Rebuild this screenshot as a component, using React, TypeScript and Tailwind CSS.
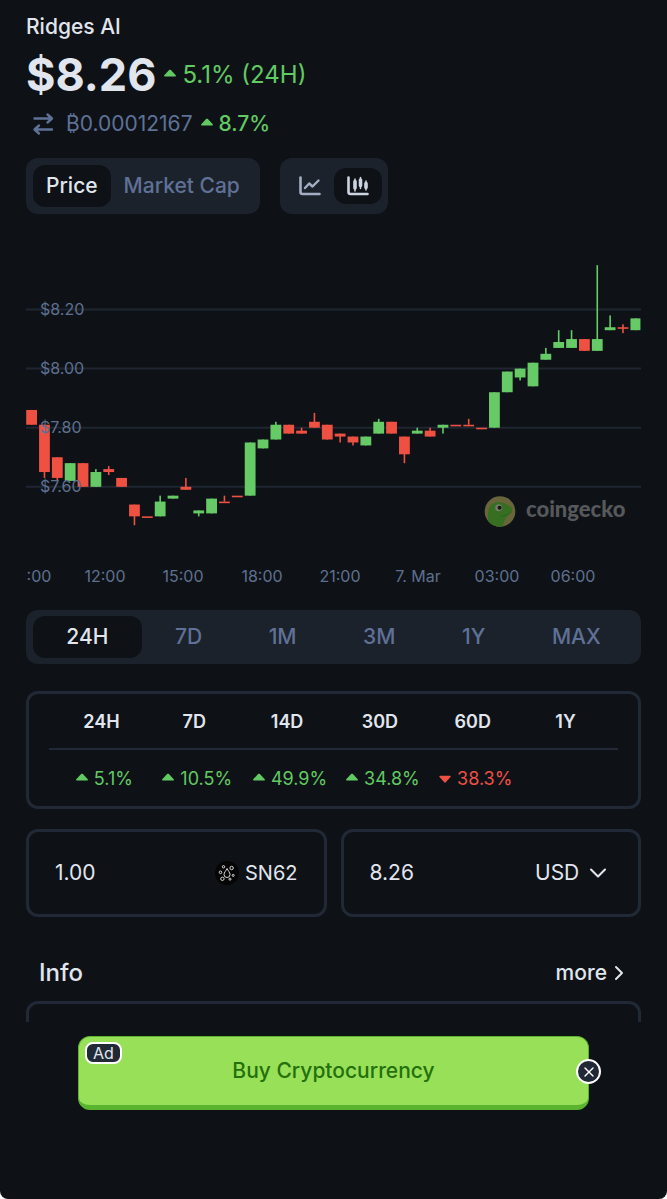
import { useState } from "react";
import { ChevronDown, ChevronRight, X } from "lucide-react";
import clsx from "clsx";

// open, close, high, low in cents
type Candle = [number, number, number, number];

const CANDLES: Candle[] = [
  [786, 781, 786, 781],
  [781, 765, 781, 763],
  [770, 763, 770, 762],
  [762, 768, 768, 762],
  [768, 760, 768, 760],
  [760, 765, 766, 760],
  [766, 765, 767, 764],
  [763, 760, 763, 760],
  [754, 750, 754, 747],
  [750, 750, 750, 750],
  [750, 755, 757, 750],
  [756, 757, 757, 756],
  [760, 759, 763, 759],
  [751, 752, 752, 750],
  [751, 756, 756, 751],
  [755, 755, 757, 755],
  [757, 757, 757, 757],
  [757, 775, 775, 757],
  [773, 776, 776, 773],
  [776, 781, 782, 776],
  [781, 778, 781, 778],
  [779, 778, 780, 778],
  [782, 780, 785, 780],
  [781, 776, 781, 776],
  [778, 777, 778, 775],
  [777, 775, 777, 774],
  [774, 777, 777, 774],
  [778, 782, 783, 778],
  [782, 778, 782, 778],
  [777, 771, 777, 768],
  [778, 779, 780, 778],
  [779, 777, 780, 777],
  [780, 781, 781, 778],
  [781, 781, 781, 781],
  [781, 781, 783, 781],
  [780, 780, 780, 780],
  [780, 792, 792, 780],
  [792, 799, 799, 792],
  [797, 800, 800, 796],
  [794, 802, 802, 794],
  [803, 805, 807, 803],
  [807, 809, 813, 807],
  [807, 810, 813, 807],
  [810, 806, 810, 806],
  [806, 810, 835, 806],
  [813, 814, 818, 813],
  [814, 814, 815, 812],
  [813, 817, 817, 813],
];

const PRICE_TICKS = [820, 800, 780, 760];

const TIME_TICKS = [
  { label: ":00", x: 13 },
  { label: "12:00", x: 79 },
  { label: "15:00", x: 157 },
  { label: "18:00", x: 236 },
  { label: "21:00", x: 314 },
  { label: "7. Mar", x: 392 },
  { label: "03:00", x: 471 },
  { label: "06:00", x: 547 },
];

const RANGES = ["24H", "7D", "1M", "3M", "1Y", "MAX"];

const CHANGES: { period: string; value: number | null }[] = [
  { period: "24H", value: 5.1 },
  { period: "7D", value: 10.5 },
  { period: "14D", value: 49.9 },
  { period: "30D", value: 34.8 },
  { period: "60D", value: -38.3 },
  { period: "1Y", value: null },
];

function priceY(cents: number) {
  return 59.5 + (820 - cents) * 2.955;
}

function Caret({ down = false }: { down?: boolean }) {
  return (
    <svg viewBox="0 0 12 12" className="size-3 shrink-0" aria-hidden="true">
      <path
        d={down ? "M1 3.5h10L6 9z" : "M5.6 1.4h.8L11.200 6.800H.8z"}
        fill="currentColor"
        stroke="currentColor"
        strokeWidth="1.4"
        strokeLinejoin="round"
      />
    </svg>
  );
}

function Change({ value, suffix = "" }: { value: number; suffix?: string }) {
  return (
    <span className={clsx("flex items-center gap-1.5", value < 0 ? "text-[#ee5044]" : "text-[#62ca62]")}>
      <Caret down={value < 0} />
      <span>
        {Math.abs(value).toFixed(1)}%{suffix}
      </span>
    </span>
  );
}

function SwapIcon() {
  return (
    <svg
      viewBox="0 0 22 24"
      className="h-6 w-[22px]"
      fill="none"
      stroke="currentColor"
      strokeWidth="2.4"
      strokeLinecap="round"
      strokeLinejoin="round"
      aria-hidden="true"
    >
      <path d="M2.500 6.500h17M15.500 2.500l4.500 4-4.500 4M20 17.500H3M7 13.500l-4.500 4 4.500 4" />
    </svg>
  );
}

function LineChartIcon() {
  return (
    <svg
      viewBox="0 0 22 20"
      className="h-5 w-[22px]"
      fill="none"
      stroke="currentColor"
      strokeLinecap="round"
      strokeLinejoin="round"
      aria-hidden="true"
    >
      <path d="M1.500 1.500V16q0 2 2 2H20.500" strokeWidth="2.600" />
      <path d="M6 12 10.200 7.500 13.500 10.500 19.500 4.500" strokeWidth="2.400" />
    </svg>
  );
}

function CandleChartIcon() {
  return (
    <svg viewBox="0 0 22 20" className="h-5 w-[22px]" fill="none" stroke="currentColor" strokeLinecap="round" aria-hidden="true">
      <path d="M1.500 1.500V16q0 2 2 2H20.500" strokeWidth="2.600" strokeLinejoin="round" />
      <path d="M8 3v12M13.500 1.500v11M19 5v9" strokeWidth="1.500" />
      <path d="M8 5.500v6.500M13.500 4v5.500M19 7.500v4" strokeWidth="3.600" />
    </svg>
  );
}

function SubnetIcon() {
  return (
    <svg viewBox="0 0 24 24" className="size-6" fill="none" stroke="#d8d8d8" aria-hidden="true">
      <circle cx="12" cy="12" r="12" fill="#050505" stroke="none" />
      <path d="M12 7.500c1 2.200 3 4 3 6a3 3 0 0 1-6 0c0-2 2-3.800 3-6z" strokeWidth="1" />
      <circle cx="8.500" cy="5.800" r="1.200" />
      <circle cx="16.600" cy="7" r="1.700" />
      <circle cx="5.500" cy="11.300" r="1.300" />
      <circle cx="18.200" cy="14.400" r="1" />
      <circle cx="7.400" cy="17.800" r="1.700" />
      <circle cx="15" cy="18.200" r="1" />
    </svg>
  );
}

function Watermark() {
  return (
    <g>
      <clipPath id="coin">
        <circle cx="474" cy="261.500" r="15.300" />
      </clipPath>
      <g clipPath="url(#coin)">
        <rect x="458" y="246" width="32" height="32" fill="#68653a" />
        <path
          d="M462 280C463 272 461 263 463 258.500c1-3 2.500-4.500 5-5.200 3-1.500 6-1.500 9-.6 3 1.200 5.500 2.300 8 4.300 1.500 1.500 1.500 3 .8 4.200-1 2-2.500 3.200-4 4.800-3 3-4.500 7-5.800 14z"
          fill="#366f22"
        />
        <path d="M474 266c5 0 8-1.500 11.500-4" stroke="#2e621e" fill="none" />
      </g>
      <circle cx="472.700" cy="257.700" r="3.500" fill="#75796e" />
      <circle cx="473.600" cy="257.700" r="2" fill="#14180f" />
      <text x="500" y="267" fill="#56585b" className="font-['Lato',sans-serif] text-[22px] font-black">
        coingecko
      </text>
    </g>
  );
}

function PriceChart() {
  return (
    <svg viewBox="0 0 615 350" className="block w-full" role="img" aria-label="Ridges AI price">
      {PRICE_TICKS.map((p) => (
        <path key={p} d={`M0 ${priceY(p)}H615`} stroke="#1f2631" strokeWidth="2" />
      ))}
      <Watermark />
      {CANDLES.map(([open, close, high, low], i) => {
        const x = 5.6 + i * 12.856;
        const top = priceY(Math.max(open, close));
        const height = Math.max(Math.abs(open - close) * 2.955, 1.6);
        return (
          <g key={i} fill={close > open ? "#66cb66" : "#ee5042"}>
            {high !== low && (
              <rect x={x - 0.8} y={priceY(high)} width="1.6" height={priceY(low) - priceY(high)} />
            )}
            <rect x={x - 5.4} y={top} width={i === CANDLES.length - 1 ? 10 : 10.8} height={height} />
          </g>
        );
      })}
      {PRICE_TICKS.map((p) => (
        <text key={p} x="14" y={priceY(p) + 5} fill="#5f708f" className="text-base">
          ${(p / 100).toFixed(2)}
        </text>
      ))}
      {TIME_TICKS.map((t) => (
        <text key={t.label} x={t.x} y="332" textAnchor="middle" fill="#5f708f" className="text-base">
          {t.label}
        </text>
      ))}
    </svg>
  );
}

export default function App() {
  const [metric, setMetric] = useState("Price");
  const [chartType, setChartType] = useState("candle");
  const [range, setRange] = useState("24H");

  return (
    <div className="bg-white">
      <div className="min-h-screen rounded-b-lg bg-[#0e1217] font-['Inter',sans-serif] text-[#e1e6ee]">
        <main className="px-[26px] pt-[13px]">
          <h1 className="text-[21px] leading-7 font-medium">Ridges AI</h1>
          <div className="mt-1.5 flex items-center gap-2">
            <span className="text-[45px] leading-14 font-bold">$8.26</span>
            <span className="text-2xl">
              <Change value={5.1} suffix=" (24H)" />
            </span>
          </div>
          <div className="mt-[5px] flex items-center gap-2 pl-1.5 text-[21px] leading-8 text-[#5f7196]">
            <button type="button" aria-label="Swap currency" className="mr-1">
              <SwapIcon />
            </button>
            <span>₿0.00012167</span>
            <span className="font-medium">
              <Change value={8.7} />
            </span>
          </div>

          <div className="mt-[18px] flex gap-5">
            <div className="flex rounded-xl bg-[#1c222c] p-[7px]">
              {["Price", "Market Cap"].map((m) => (
                <button
                  key={m}
                  type="button"
                  onClick={() => setMetric(m)}
                  className={clsx(
                    "h-[42px] rounded-xl px-[13px] text-[21px] font-medium",
                    metric === m ? "bg-[#0e1217]" : "text-[#5f7196]",
                  )}
                >
                  {m}
                </button>
              ))}
            </div>
            <div className="flex items-center rounded-xl bg-[#1c222c] px-1.5">
              {[
                { id: "line", label: "Line chart", icon: <LineChartIcon /> },
                { id: "candle", label: "Candlestick chart", icon: <CandleChartIcon /> },
              ].map((c) => (
                <button
                  key={c.id}
                  type="button"
                  aria-label={c.label}
                  onClick={() => setChartType(c.id)}
                  className={clsx(
                    "flex h-9 w-12 items-center justify-center rounded-xl",
                    chartType === c.id ? "bg-[#0e1217] text-[#cdd3e0]" : "text-[#a3adc4]",
                  )}
                >
                  {c.icon}
                </button>
              ))}
            </div>
          </div>

          <div className="mt-9">
            <PriceChart />
          </div>

          <div className="mt-[10px] flex rounded-xl bg-[#1c222c] px-[7px] py-1.5">
            {RANGES.map((r) => (
              <button
                key={r}
                type="button"
                onClick={() => setRange(r)}
                className={clsx(
                  "h-[42px] flex-auto rounded-xl text-[21px] font-medium",
                  range === r ? "bg-[#0e1217]" : "text-[#5f7196]",
                )}
              >
                {r}
              </button>
            ))}
          </div>

          <section className="mt-[27px] rounded-xl border-3 border-[#212936] px-5">
            <table className="flex flex-col text-lg">
              <thead className="contents">
                <tr className="grid grid-cols-6 border-b-2 border-[#212936] px-1.5">
                  {CHANGES.map((c) => (
                    <th key={c.period} className="pt-[14px] pb-3 text-center font-semibold">
                      {c.period}
                    </th>
                  ))}
                </tr>
              </thead>
              <tbody className="contents">
                <tr className="grid grid-cols-6 pr-[3px] pl-[9px]">
                  {CHANGES.map((c) => (
                    <td key={c.period} className="flex justify-center pt-[15px] pb-[13px]">
                      {c.value != null ? <Change value={c.value} /> : null}
                    </td>
                  ))}
                </tr>
              </tbody>
            </table>
          </section>

          <div className="mt-5 grid grid-cols-2 gap-3.5 text-[21px]">
            <div className="flex h-[88px] items-center rounded-xl border-3 border-[#212936] px-[26px]">
              <input
                id="coin-amount"
                defaultValue="1.00"
                className="w-0 min-w-0 flex-1 bg-transparent outline-none"
              />
              <label htmlFor="coin-amount" className="flex items-center gap-1.5 text-xl">
                <SubnetIcon />
                SN62
              </label>
            </div>
            <div className="flex h-[88px] items-center rounded-xl border-3 border-[#212936] px-[26px]">
              <input
                aria-label="Amount in USD"
                defaultValue="8.26"
                className="w-0 min-w-0 flex-1 bg-transparent outline-none"
              />
              <div className="relative flex items-center">
                <select aria-label="Currency" className="appearance-none bg-transparent pr-8 outline-none">
                  <option>USD</option>
                </select>
                <ChevronDown
                  className="pointer-events-none absolute right-0 size-7"
                  strokeWidth={1.8}
                  aria-hidden="true"
                />
              </div>
            </div>
          </div>

          <div className="mt-10 flex items-center justify-between pr-2.5 pl-[13px]">
            <h2 className="text-2xl leading-8 font-medium">Info</h2>
            <a href="#info" className="flex items-center text-[21px] font-medium">
              more
              <ChevronRight className="size-6" strokeWidth={2} aria-hidden="true" />
            </a>
          </div>
          <div className="mt-3 h-[21px] rounded-t-xl border-3 border-b-0 border-[#212936]" />
        </main>

        <aside className="relative mx-[78px] mt-3.5">
          <a
            href="#buy"
            className="flex h-[74px] items-center justify-center rounded-xl border border-b-5 border-[#5bb42f] bg-[#98e058] text-[21px] font-medium text-[#24700c]"
          >
            Buy Cryptocurrency
          </a>
          <span className="absolute top-1.5 left-[7px] rounded-lg border-2 border-white bg-[#212936] px-1.5 text-base leading-[18px]">
            Ad
          </span>
          <button
            type="button"
            aria-label="Close ad"
            className="absolute top-[23px] -right-3 flex size-[25px] items-center justify-center rounded-full border-2 border-white bg-[#212936] text-white"
          >
            <X className="size-4" strokeWidth={2} />
          </button>
        </aside>
      </div>
    </div>
  );
}
